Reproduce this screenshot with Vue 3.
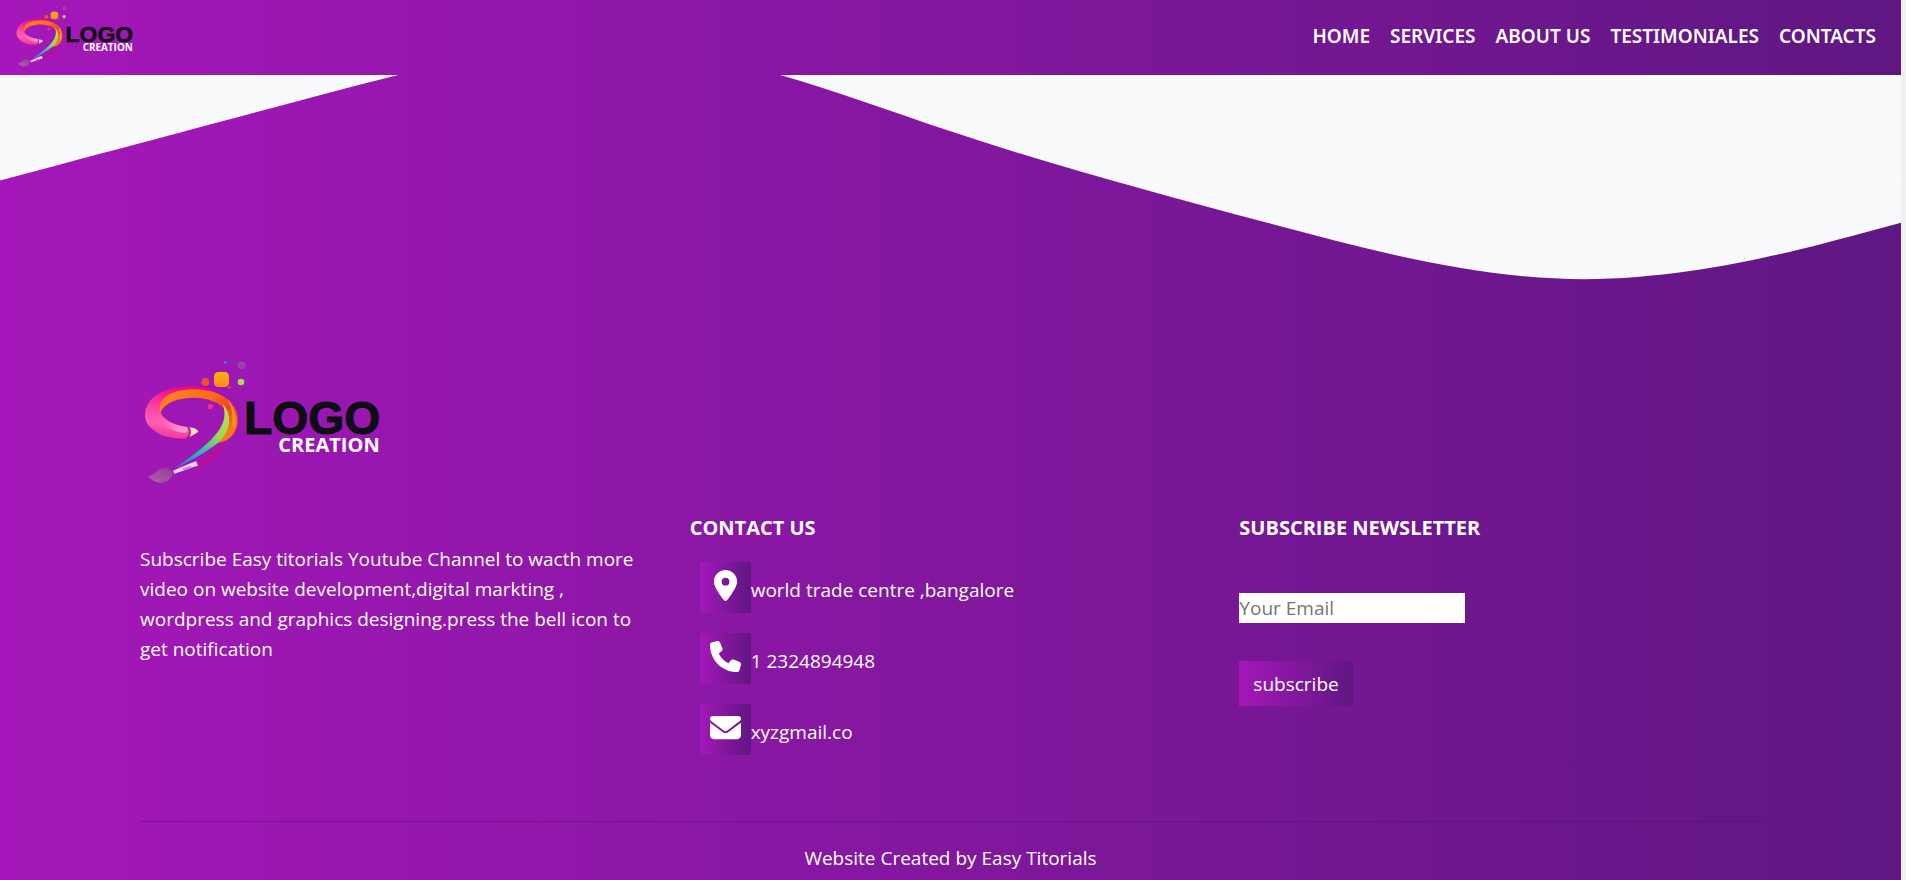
<script setup>
import { ref } from 'vue'

const email = ref('')

const links = [
  { label: 'HOME', href: '#home' },
  { label: 'SERVICES', href: '#services' },
  { label: 'ABOUT US', href: '#about' },
  { label: 'TESTIMONIALES', href: '#testimonials' },
  { label: 'CONTACTS', href: '#contacts' },
]

const contacts = [
  {
    text: 'world trade centre ,bangalore',
    viewBox: '-64 0 512 512',
    path: 'M215.7 499.2C267 435 384 279.4 384 192C384 86 298 0 192 0S0 86 0 192c0 87.4 117 243 168.3 307.2c12.3 15.3 35.1 15.3 47.4 0zM192 128a64 64 0 1 1 0 128 64 64 0 1 1 0-128z',
  },
  {
    text: '1 2324894948',
    viewBox: '0 0 512 512',
    path: 'M164.9 24.6c-7.7-18.6-28-28.5-47.4-23.2l-88 24C12.1 30.2 0 46 0 64C0 311.4 200.6 512 448 512c18 0 33.8-12.1 38.6-29.5l24-88c5.3-19.4-4.6-39.7-23.2-47.4l-96-40c-16.3-6.8-35.2-2.1-46.3 11.6L304.7 368C234.3 334.7 177.3 277.7 144 207.3L193.3 167c13.7-11.2 18.4-30 11.6-46.3l-40-96z',
  },
  {
    text: 'xyzgmail.co',
    viewBox: '0 0 512 512',
    path: 'M48 64C21.5 64 0 85.5 0 112c0 15.1 7.1 29.3 19.2 38.4L236.8 313.6c11.4 8.5 27 8.5 38.4 0L492.8 150.4c12.1-9.1 19.2-23.3 19.2-38.4c0-26.5-21.5-48-48-48H48zM0 176V384c0 35.3 28.7 64 64 64H448c35.3 0 64-28.7 64-64V176L294.4 339.2c-22.8 17.1-54 17.1-76.8 0L0 176z',
  },
]
</script>

<template>
  <div class="page">
    <header class="navbar">
      <a class="brand" href="#home" aria-label="Logo Creation">
        <svg class="brand-mark" viewBox="30 0 780 450">
          <use href="#brand-logo" x="30" y="0" width="780" height="450" />
        </svg>
      </a>
      <nav class="links">
        <a v-for="link in links" :key="link.label" :href="link.href">{{ link.label }}</a>
      </nav>
    </header>

    <svg class="wave" viewBox="0 80 1440 160" aria-hidden="true">
      <path d="M0,160L40,149.3C80,138.7,160,117.3,240,96C320,74.7,400,53.3,480,58.7C560,64,640,96,720,122.7C800,149.3,880,170.7,960,192C1040,213.3,1120,234.7,1200,234.7C1280,234.7,1360,213.3,1400,202.7L1440,192L1440,0L0,0Z" />
    </svg>

    <footer class="footer">
      <div class="columns">
        <section>
          <svg class="footer-logo" viewBox="30 0 780 450" role="img" aria-label="Logo Creation">
            <defs>
              <linearGradient id="lg-pink" x1="0.6" y1="0" x2="0.4" y2="1">
                <stop offset="0" stop-color="#f0047f" />
                <stop offset="0.45" stop-color="#fb3fa0" />
                <stop offset="0.75" stop-color="#ff5fb4" />
                <stop offset="1" stop-color="#f43596" />
              </linearGradient>
              <linearGradient id="lg-shine" x1="0" y1="0" x2="1" y2="1">
                <stop offset="0" stop-color="#ff55ad" stop-opacity="0" />
                <stop offset="1" stop-color="#ffb0dc" />
              </linearGradient>
              <linearGradient id="lg-orange" x1="0" y1="0" x2="1" y2="0.6">
                <stop offset="0" stop-color="#ff8a1c" />
                <stop offset="0.55" stop-color="#fb6a1a" />
                <stop offset="0.8" stop-color="#f0431f" />
                <stop offset="1" stop-color="#fa7a18" />
              </linearGradient>
              <linearGradient id="lg-rainbow" x1="0.9" y1="0" x2="0.1" y2="1">
                <stop offset="0" stop-color="#c3dc4c" />
                <stop offset="0.35" stop-color="#98d958" />
                <stop offset="0.62" stop-color="#3bb5b4" />
                <stop offset="0.85" stop-color="#2496d4" />
                <stop offset="1" stop-color="#6d5bd0" />
              </linearGradient>
              <linearGradient id="lg-brush" x1="0" y1="1" x2="1" y2="0">
                <stop offset="0" stop-color="#b060b0" />
                <stop offset="1" stop-color="#8f3f98" />
              </linearGradient>
              <linearGradient id="lg-amber" x1="0" y1="0" x2="0" y2="1">
                <stop offset="0" stop-color="#f7b20f" />
                <stop offset="1" stop-color="#ff8a16" />
              </linearGradient>
            </defs>
            <symbol id="brand-logo" viewBox="30 0 780 450">
              <path fill="#d0067f" d="M203 356C242 338 270 312 288 288C280 318 246 350 207 363Z" />
              <path fill="url(#lg-pink)" d="M262 137C205 118 128 119 84 147C44 172 34 217 58 244C82 272 125 284 168 280C180 268 182 256 172 246C130 242 96 222 90 198C86 160 124 136 190 134Z" />
              <path fill="url(#lg-shine)" d="M76 206C88 236 128 262 166 264C174 258 175 250 171 246C130 240 98 222 90 200Z" />
              <path fill="url(#lg-orange)" d="M90 205C80 158 128 132 196 133C268 134 322 170 323 222C323 262 300 290 262 293C284 278 298 248 298 220C292 184 250 160 196 158C140 158 104 172 90 205Z" />
              <path fill="#ff9d17" d="M290 160C310 180 319 204 314 246C309 248 306 240 308 226C308 198 302 178 290 160Z" />
              <path fill="url(#lg-rainbow)" d="M278 178C304 200 308 254 268 290C228 322 176 350 132 373C184 332 238 298 268 254C284 230 288 204 278 178Z" />
              <path fill="#a7157f" d="M172 248Q186 263 170 280L177 275Q190 262 177 247Z" />
              <path fill="#fce3a8" d="M178 247L194 250Q204 255 205 260Q198 265 178 276Q187 262 178 247Z" />
              <path fill="#ecd3f3" d="M129 377C154 368 178 354 199 349L204 362C180 369 156 378 133 386Z" />
              <path fill="#c47dd4" d="M158 371L182 362L184 367L160 376Z" />
              <path fill="url(#lg-brush)" d="M54 393C72 394 78 371 104 369C120 368 132 378 127 391C121 407 101 416 82 412C69 409 62 402 54 393Z" />
              <rect x="252" y="81" width="45" height="45" rx="13" fill="url(#lg-amber)" />
              <circle cx="226" cy="111" r="12" fill="#f24c2a" />
              <circle cx="333" cy="111" r="10" fill="#a8d95b" />
              <circle cx="335" cy="61" r="12" fill="#9445a3" />
              <circle cx="286" cy="52" r="5" fill="#3c78d8" />
              <circle cx="298" cy="127" r="4" fill="#f24c2a" />
              <circle cx="315" cy="153" r="7" fill="#8c2ba0" />
              <circle cx="241" cy="185" r="8" fill="#f02e9b" />
              <text x="342" y="267" font-family="'Liberation Sans', Arial, sans-serif" font-weight="700" font-size="139" fill="#0d0d14" stroke="#0d0d14" stroke-width="3">LOGO</text>
              <text x="445" y="321" font-family="'Open Sans', 'Noto Sans', sans-serif" font-weight="700" font-size="60" fill="#ffffff">CREATION</text>
            </symbol>
            <use href="#brand-logo" x="30" y="0" width="780" height="450" />
          </svg>
          <p class="about">
            Subscribe Easy titorials Youtube Channel to wacth more video on website
            development,digital markting , wordpress and graphics designing.press the bell icon to
            get notification
          </p>
        </section>

        <section class="lowered">
          <h2>CONTACT US</h2>
          <ul class="contacts">
            <li v-for="item in contacts" :key="item.text">
              <span class="tile">
                <svg :viewBox="item.viewBox" aria-hidden="true"><path :d="item.path" /></svg>
              </span>
              <span>{{ item.text }}</span>
            </li>
          </ul>
        </section>

        <section class="lowered">
          <h2>SUBSCRIBE NEWSLETTER</h2>
          <form class="newsletter" @submit.prevent>
            <input v-model="email" type="email" placeholder="Your Email" aria-label="Your Email" />
            <button type="submit">subscribe</button>
          </form>
        </section>
      </div>
      <hr />
      <p class="credit">Website Created by Easy Titorials</p>
    </footer>
  </div>
</template>

<style>
body {
  margin: 0;
  background: #f0f0f0;
}
</style>

<style scoped>
.page {
  --brand: linear-gradient(to right, #a517ba, #5f1782);
  box-sizing: border-box;
  min-height: 100vh;
  margin-right: 5px;
  background: var(--brand);
  color: #fff;
  font-family: 'Open Sans', 'Noto Sans', sans-serif;
  font-size: 19px;
  line-height: 30px;
}

.navbar {
  display: flex;
  align-items: center;
  justify-content: space-between;
  height: 75px;
  padding: 0 25px 0 14px;
}

.brand {
  display: flex;
  padding-bottom: 4px;
}

.brand-mark {
  width: 129px;
  height: 75px;
}

.links {
  display: flex;
  gap: 20px;
  padding-bottom: 4px;
}

.links a {
  color: #fff;
  font-family: 'Noto Sans', 'Open Sans', sans-serif;
  font-weight: 600;
  text-decoration: none;
}

.wave {
  display: block;
  width: 100%;
  fill: #f8fafb;
}

.footer {
  padding: 59px 140px 0;
}

.columns {
  display: grid;
  grid-template-columns: repeat(3, 1fr);
  gap: 28px;
}

.footer-logo {
  display: block;
  width: 260px;
  height: 150px;
}

.about {
  margin: 49px 0 0;
  padding-right: 20px;
}

.lowered {
  padding-top: 168px;
}

h2 {
  margin: 0;
  font-size: 20px;
  font-weight: 700;
  line-height: 30px;
}

.contacts {
  display: grid;
  gap: 20px;
  margin: 19px 0 0;
  padding: 0 0 0 10px;
  list-style: none;
}

.contacts li {
  display: flex;
  align-items: center;
}

.tile {
  box-sizing: border-box;
  width: 51px;
  height: 51px;
  padding: 8px 10px;
  border-radius: 2px;
  background: var(--brand);
}

.tile svg {
  display: block;
  width: 31px;
  height: 31px;
  fill: #fff;
}

.contacts li > span:last-child {
  padding-top: 4px;
}

.newsletter {
  display: flex;
  flex-direction: column;
  align-items: flex-start;
  gap: 38px;
  margin-top: 50px;
}

.newsletter input {
  box-sizing: border-box;
  width: 226px;
  height: 30px;
  padding: 0;
  border: 0;
  background: #fff;
  color: #222;
  font: inherit;
}

.newsletter input::placeholder {
  color: #757575;
  opacity: 1;
}

.newsletter button {
  height: 45px;
  padding: 0 14px;
  border: 0;
  background: var(--brand);
  color: #fff;
  font: inherit;
}

hr {
  height: 1px;
  margin: 66px 0 0;
  border: 0;
  background: rgba(70, 15, 110, 0.4);
}

.credit {
  margin: 21px 0 0;
  text-align: center;
}
</style>
